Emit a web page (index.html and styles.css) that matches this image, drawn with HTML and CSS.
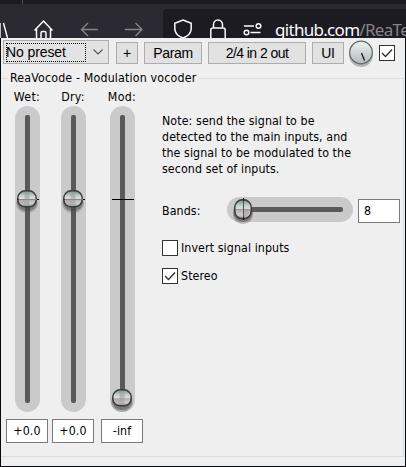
FILE: index.html
```
<!DOCTYPE html>
<html lang="en">
<head>
<meta charset="utf-8">
<title>ReaVocode</title>
<link rel="stylesheet" href="styles.css">
</head>
<body>
<svg width="0" height="0" class="defs">
  <defs>
    <linearGradient id="metal" x1="0" y1="0" x2="0" y2="1"><stop offset="0" stop-color="#7d8882"/><stop offset=".3" stop-color="#c3d0ca"/><stop offset=".5" stop-color="#dddfdf"/><stop offset=".54" stop-color="#b9b0b6"/><stop offset=".8" stop-color="#d0cdcf"/><stop offset="1" stop-color="#8d898b"/></linearGradient>
    <linearGradient id="dial" x1="0" y1="0" x2="0" y2="1"><stop offset="0" stop-color="#eef2f0"/><stop offset=".5" stop-color="#cfd8d6"/><stop offset="1" stop-color="#b0bab8"/></linearGradient>
    <symbol id="thumb" viewBox="0 0 24 26">
      <rect x="1" y="5" width="22" height="20" rx="10" fill="#555" opacity=".3"/>
      <rect x="2" y="5" width="20" height="18" rx="9" fill="#444" opacity=".45"/>
      <rect x="2.8" y="2.8" width="18.4" height="16" rx="7.3" fill="url(#metal)" stroke="#393c3b" stroke-width="1.5"/>
      <path d="M4 12h6v5.500q-5-1-6-5.500" fill="#b28ca0" opacity=".4"/>
      <path d="M9.500 5h5v12h-5z" fill="#929b98" opacity=".5"/>
    </symbol>
  </defs>
</svg>
<div class="screen">
  <header class="browser">
    <div class="tabs"></div>
    <div class="nav">
      <svg class="nav-icons" width="163" height="34" viewBox="0 4 163 34" fill="none">
        <path d="M0 23v15M3.500 23l4 15" stroke="#fbfbfe" stroke-width="1.4"/>
        <path d="M34.500 30.500l9-9.500 9 9.500M36.500 29v9M50.500 29v9M41 38v-5q0-1.500 1.500-1.500h2q1.500 0 1.500 1.500v5" stroke="#fbfbfe" stroke-width="1.5"/>
        <path d="M98 29.500H82M88 23l-6.500 6.500L88 36M125 29.500h16M135.500 23l6.500 6.500-6.500 6.500" stroke="#85848b" stroke-width="1.4"/>
      </svg>
      <div class="urlbar">
        <svg width="112" height="29" viewBox="163 9 112 29" fill="none" stroke="#fbfbfe" stroke-width="1.5">
          <path d="M183 20l8.200 3.200v5.300c0 3.500-2.500 7.500-8.200 9.500-5.700-2-8.200-6-8.200-9.500v-5.300z"/>
          <path d="M213.500 28v-3.500a4.500 4.500 0 0 1 9 0V28M210.800 39v-9q0-2 2-2h10.400q2 0 2 2v9"/>
          <path d="M244 26h10M250.500 32.500h10"/><circle cx="258.500" cy="26" r="2.300"/><circle cx="246.500" cy="32.500" r="2.300"/>
        </svg>
        <span class="url">github.com<i>/ReaTe</i></span>
      </div>
    </div>
  </header>
  <main class="panel">
    <div class="toolbar">
      <div class="combo"><span class="preset">No preset</span><svg width="12" height="8" viewBox="0 0 12 8"><path d="M1.500 1.500l4.500 4.500 4.500-4.500" fill="none" stroke="#555" stroke-width="1.1"/></svg></div>
      <button class="plus">+</button><button class="param">Param</button><button class="pins">2/4 in 2 out</button><button class="ui">UI</button>
      <svg class="dial" width="26" height="28" viewBox="0 0 26 28"><circle cx="13" cy="15" r="12" fill="#888" opacity=".55"/><circle cx="13" cy="12.500" r="11.300" fill="url(#dial)" stroke="#626866" stroke-width="1.2"/><path d="M13.500 13l3 7.500" stroke="#222" stroke-width="1.4"/></svg>
      <span class="check"><svg width="14" height="14" viewBox="0 0 14 14"><path d="M2 7l3.500 3.500L12 3.500" fill="none" stroke="#333" stroke-width="1.4"/></svg></span>
    </div>
    <fieldset>
      <legend>ReaVocode - Modulation vocoder</legend>
      <div class="content">
        <div class="channel"><label>Wet:</label>
          <div class="fader"><i></i><svg class="thumb" width="24" height="26"><use href="#thumb"/></svg><b class="tick short"></b></div>
          <div class="value">+0.0</div></div>
        <div class="channel"><label>Dry:</label>
          <div class="fader"><i></i><svg class="thumb" width="24" height="26"><use href="#thumb"/></svg><b class="tick short"></b></div>
          <div class="value">+0.0</div></div>
        <div class="channel mod"><label>Mod:</label>
          <div class="fader"><i></i><b class="tick"></b><svg class="thumb low" width="24" height="26"><use href="#thumb"/></svg></div>
          <div class="value">-inf</div></div>
        <div class="options">
          <p>Note: send the signal to be<br>detected to the main inputs, and<br>the signal to be modulated to the<br>second set of inputs.</p>
          <div class="bands"><span class="name">Bands:</span>
            <div class="slider"><i></i>
              <svg class="bands-thumb" width="22" height="28" viewBox="0 0 22 28"><rect x="1" y="6" width="20" height="21" rx="9.500" fill="#555" opacity=".35"/><rect x="1.500" y="5" width="19" height="20" rx="9" fill="#444" opacity=".4"/><rect x="2.800" y="2.800" width="16.400" height="19" rx="7.500" fill="url(#metal)" stroke="#393c3b" stroke-width="1.5"/><path d="M12 12h6q0 6-6 8z" fill="#b28ca0" opacity=".4"/><path d="M4 12.500h14" stroke="#929b98"/><path d="M11.500 1v3M11.500 20v3" stroke="#111"/><path d="M11.500 4v16" stroke="#555"/></svg>
            </div><div class="value count">8</div></div>
          <div class="option"><span class="check"></span>Invert signal inputs</div>
          <div class="option"><span class="check"><svg width="14" height="14" viewBox="0 0 14 14"><path d="M2 7l3.500 3.500L12 3.500" fill="none" stroke="#333" stroke-width="1.400"/></svg></span>Stereo</div>
        </div>
      </div>
    </fieldset>
  </main>
</div>
</body>
</html>
```
FILE: styles.css
```
* { box-sizing: border-box; }
body { margin: 0; overflow: hidden; }
.defs { position: absolute; }
.screen { width: 406px; height: 467px; background: #08080f; overflow: hidden; color: #000; font: 12.3px/16px "DejaVu Sans Condensed", "DejaVu Sans", sans-serif; font-stretch: condensed; letter-spacing: .1px; }
.browser { height: 38px; background: #2b2a33; overflow: hidden; }
.tabs { height: 4px; width: 406px; background: #1c1b22; border-left: 22px solid #1c1b22; box-shadow: inset 1px 0 #4c4b54; }
.nav { display: flex; height: 34px; }
.nav-icons { flex: none; }
.urlbar { display: flex; width: 243px; height: 40px; margin-top: 5px; background: #1c1b22; border-radius: 4px 0 0 0; overflow: hidden; }
.urlbar svg { flex: none; }
.url { font: 17px/24px "Noto Sans", sans-serif; padding-top: 9px; color: #fbfbfe; white-space: nowrap; letter-spacing: -.7px; }
.url i { font-style: normal; color: #85848b; }
.panel { width: 404px; height: 428px; margin-left: 1px; background: #efefef; }
.toolbar { display: flex; align-items: flex-start; height: 32px; padding: 2px 0 0 2px; font: 14px/20px "Liberation Sans", sans-serif; }
.combo { display: flex; align-items: center; width: 106px; height: 24px; padding-left: 2px; border: 1px solid #adadad; background: #e3e3e3; }
.preset { width: 80px; height: 19px; line-height: 17px; border: 1px dotted #000; letter-spacing: -.1px; text-indent: -1px; }
.combo svg { margin-left: 6px; }
button { height: 22px; margin: 2px 0 0 6px; padding: 0; border: 1px solid #adadad; background: #e1e1e1; color: #000; font: 14px/20px "Liberation Sans", sans-serif; white-space: nowrap; }
.plus { width: 22px; margin-left: 7px; }
.param { width: 58px; letter-spacing: -.3px; }
.pins { width: 98px; letter-spacing: -.55px; }
.ui { width: 32px; letter-spacing: -.3px; }
.dial { margin: 0 0 0 4px; flex: none; }
.check { display: block; flex: none; width: 16px; height: 16px; border: 1px solid #333; background: #fff; }
.check svg { display: block; }
.toolbar .check { margin: 5px 0 0 5px; }
fieldset { margin: 0 1px 0 0; padding: 0; height: 387px; border: 1px solid #dcdcdc; border-left: 0; min-width: 0; }
legend { margin-left: 7px; padding: 0 2px; height: 17px; line-height: 17px; white-space: nowrap; letter-spacing: .17px; }
.content { display: flex; padding-left: 5px; margin-top: 2px; }
.channel { width: 42px; margin-right: 4px; display: flex; flex-direction: column; align-items: center; }
.mod { margin-left: 3px; margin-right: 19px; }
.channel label { height: 17px; white-space: nowrap; letter-spacing: .3px; }
.fader { position: relative; width: 25px; height: 306px; padding-top: 9px; border-radius: 13px; background: #cacaca; }
.fader i { display: block; width: 5px; height: 288px; margin: 0 auto; border-radius: 2px; background: #595959; }
.thumb { position: absolute; left: 0; top: 82px; }
.low { top: 281px; }
.tick { position: absolute; left: 2px; top: 93px; width: 22px; height: 1px; background: #000; }
.short { background: linear-gradient(90deg, #333 2px, #888 2px, #888 20px, #000 20px); }
.value { width: 42px; height: 24px; margin-top: 7px; border: 1px solid #7a7a7a; background: #fff; line-height: 22px; text-align: center; }
.options { padding-top: 24px; width: 240px; }
.options p { margin: 0; white-space: nowrap; }
.bands { display: flex; height: 26px; margin-top: 20px; }
.name { width: 65px; line-height: 28px; }
.slider { position: relative; width: 126px; height: 25px; padding: 10px; border-radius: 13px; background: #cacaca; }
.slider i { display: block; height: 5px; border-radius: 2px; background: #595959; }
.bands-thumb { position: absolute; left: 5px; top: 0; }
.count { margin: 2px 0 0 5px; text-align: left; padding-left: 5px; }
.option { display: flex; margin-top: 12px; gap: 3px; line-height: 17px; height: 16px; white-space: nowrap; }
.bands + .option { margin-top: 17px; }
```
